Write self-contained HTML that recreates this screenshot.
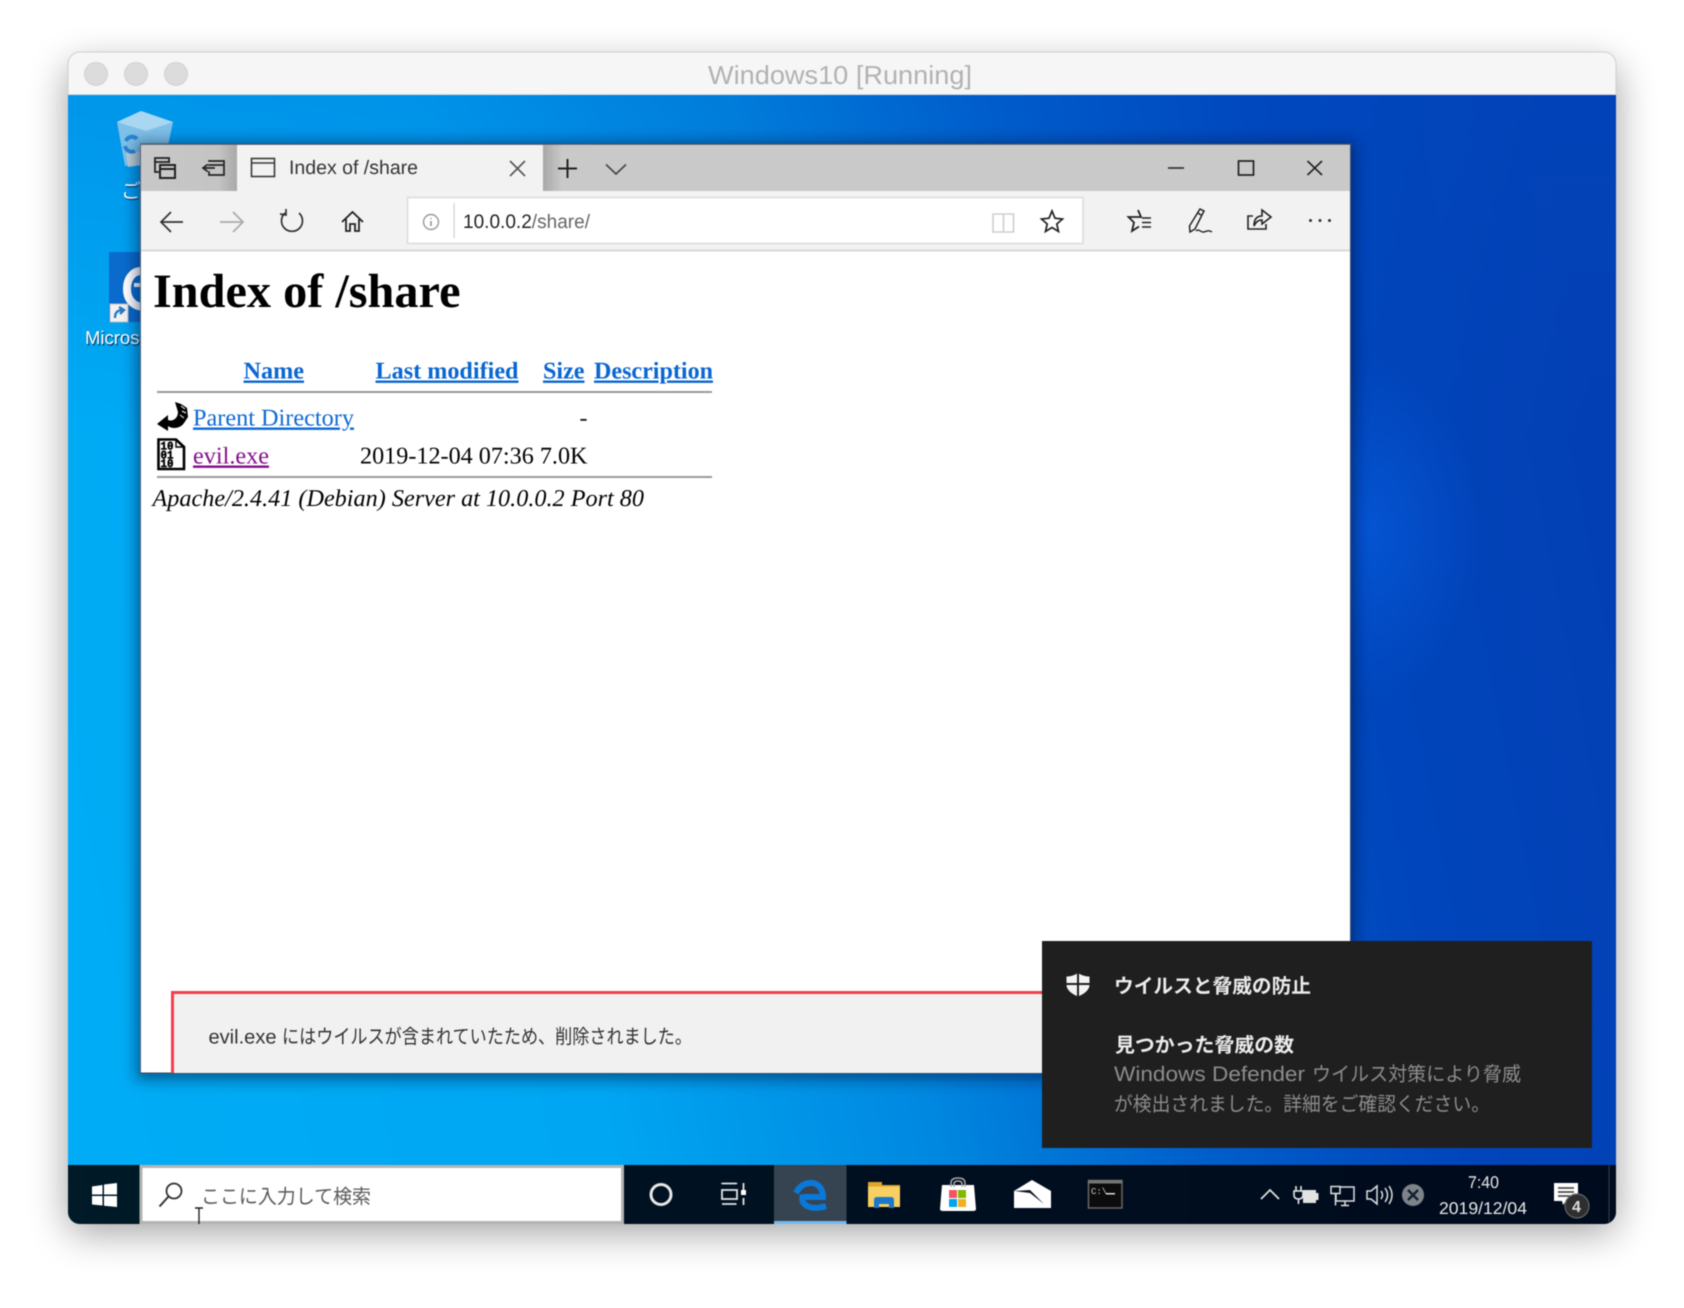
<!DOCTYPE html>
<html lang="ja"><head><meta charset="utf-8"><title>Windows10 [Running]</title>
<style>
html,body{margin:0;padding:0;background:#fff;width:1684px;height:1308px;overflow:hidden}
svg{display:block;position:absolute;left:0;top:0;filter:blur(.65px)}
text{font-family:"Liberation Sans","Noto Sans CJK JP",sans-serif;text-rendering:geometricPrecision}
.s{font-family:"Liberation Serif","Noto Serif CJK SC",serif}
</style></head><body>
<svg width="1684" height="1308" viewBox="0 0 1684 1308" xmlns="http://www.w3.org/2000/svg">
<defs>
<filter id="vmsh" x="-10%" y="-10%" width="120%" height="125%"><feGaussianBlur stdDeviation="20"/></filter>
<filter id="brsh" x="-5%" y="-5%" width="110%" height="110%"><feGaussianBlur stdDeviation="7"/></filter>
<clipPath id="vm"><path d="M68,95H1616V1212a12,12 0 0 1-12,12H80a12,12 0 0 1-12-12Z"/></clipPath>
<linearGradient id="wall" gradientUnits="userSpaceOnUse" x1="68" y1="820" x2="1616" y2="520">
<stop offset="0" stop-color="#00acf5"/><stop offset=".3" stop-color="#00a6f2"/><stop offset=".5" stop-color="#0088e0"/><stop offset=".66" stop-color="#0060cc"/><stop offset=".82" stop-color="#0046bc"/><stop offset="1" stop-color="#033fb4"/></linearGradient>
<linearGradient id="top" x1="0" y1="0" x2="0" y2="1"><stop offset="0" stop-color="#0050c8" stop-opacity=".22"/><stop offset=".3" stop-color="#0050c8" stop-opacity="0"/></linearGradient>
<radialGradient id="glow"><stop offset="0" stop-color="#0a66ee" stop-opacity=".45"/><stop offset="1" stop-color="#0a66ee" stop-opacity="0"/></radialGradient>
<linearGradient id="tabl" x1="0" y1="0" x2="1" y2="0"><stop offset="0" stop-color="#c8c8c8"/><stop offset=".8" stop-color="#c4c4c4"/><stop offset="1" stop-color="#a8a8a8"/></linearGradient>
<linearGradient id="tabr" x1="0" y1="0" x2="1" y2="0"><stop offset="0" stop-color="#a8a8a8"/><stop offset="1" stop-color="#cacaca"/></linearGradient>
<linearGradient id="tb" x1="0" y1="0" x2="1" y2="0"><stop offset="0" stop-color="#001a28"/><stop offset=".5" stop-color="#001020"/><stop offset="1" stop-color="#000b1e"/></linearGradient>
</defs>

<rect width="1684" height="1308" fill="#fff"/>
<rect x="68" y="66" width="1548" height="1166" rx="12" fill="#000" opacity=".38" filter="url(#vmsh)"/>
<path d="M68,64a12,12 0 0 1 12-12H1604a12,12 0 0 1 12,12V96H68Z" fill="#f6f6f6"/>
<path d="M68,95V64a12,12 0 0 1 12-12H1604a12,12 0 0 1 12,12V95" fill="none" stroke="#cfcfcf"/>
<rect x="68" y="94" width="1548" height="1.500" fill="#dedede"/>
<g fill="#dcdcdc" stroke="#d2d2d2"><circle cx="96" cy="74" r="11.500"/><circle cx="136" cy="74" r="11.500"/><circle cx="176" cy="74" r="11.500"/></g>
<text x="708" y="84" font-size="26" fill="#b2b2b2" textLength="264" lengthAdjust="spacingAndGlyphs">Windows10 [Running]</text>

<g clip-path="url(#vm)">
<rect x="68" y="95" width="1548" height="1130" fill="url(#wall)"/>
<rect x="68" y="95" width="1548" height="1130" fill="url(#top)"/>
<ellipse cx="1370" cy="530" rx="110" ry="170" fill="url(#glow)"/>

<!-- desktop icons -->
<polygon points="117,122 141,111 173,122 165,160 125,166" fill="#7ec1e8"/>
<polygon points="117,122 141,111 173,122 146,131" fill="#a9d7f2"/>
<polygon points="126,153 165,150 163,162 128,167" fill="#bccfd8"/>
<path d="M126,141a6.500,6.500 0 0 1 11-2" fill="none" stroke="#2a86d4" stroke-width="4"/>
<path d="M125,146a7,7 0 0 0 10,5" fill="none" stroke="#2a86d4" stroke-width="4"/>
<text x="121" y="198" font-size="20" fill="#0a3e70" opacity=".75" dx="1" dy="1.500">ごみ箱</text>
<text x="121" y="198" font-size="20" fill="#fff">ごみ箱</text>
<rect x="109" y="252" width="32" height="70" fill="#0a6bcc"/>
<path d="M146,272C134,268 127,278 127,289C127,302 137,309 148,306" fill="none" stroke="#fff" stroke-width="8"/>
<path d="M134,285H142" stroke="#fff" stroke-width="4"/>
<rect x="110" y="304" width="18" height="18" fill="#f2f2f2" stroke="#bbb"/>
<path d="M115,318c0-6 3-8 8-8M119,307l5,3-4,4" fill="none" stroke="#2878c8" stroke-width="2.400"/>
<text x="85" y="344" font-size="18.500" fill="#05294f" opacity=".8" dx="1" dy="1.500">Microsoft Edge</text>
<text x="85" y="344" font-size="18.500" fill="#fff">Microsoft Edge</text>

<!-- browser shadow -->
<rect x="136" y="142" width="1219" height="938" fill="#00183c" opacity=".5" filter="url(#brsh)"/>
<!-- browser -->
<rect x="140.500" y="144" width="1210" height="929" fill="#fff"/>
<rect x="140.500" y="144" width="1210" height="47" fill="#c9c9c9"/>
<rect x="140.500" y="144" width="97" height="47" fill="url(#tabl)"/>
<rect x="543" y="144" width="20" height="47" fill="url(#tabr)"/>
<rect x="237" y="145" width="306" height="46" fill="#f2f2f2"/>
<rect x="140.500" y="191" width="1210" height="59" fill="#f2f2f2"/>
<rect x="140.500" y="249.500" width="1210" height="2" fill="#dadada"/>
<rect x="140" y="143.500" width="1211" height="1.200" fill="#3d4f62"/>
<rect x="140" y="144" width="1" height="930" fill="#56687a"/>
<rect x="1350" y="144" width="1" height="800" fill="#3d5378"/>
<rect x="140" y="1072.500" width="905" height="1.200" fill="#3a4e60"/>

<!-- tab strip icons -->
<g stroke="#222" stroke-width="2" fill="none" stroke-linecap="square" stroke-linejoin="miter">
<path d="M169,162V158H155V172H159" stroke-width="1.800"/><path d="M155,162H169" stroke-width="1.800"/>
<rect x="160" y="165" width="15" height="13" fill="#c8c8c8"/><path d="M160,169H175"/>
<path d="M209,161H224V175H209V172M209,165H224M214,168H204" stroke-width="1.700"/><path d="M207,165l-4,3 4,3" stroke-width="1.700"/>
</g>
<g fill="none" stroke="#3a3a3a" stroke-width="1.600">
<rect x="251.500" y="158.500" width="23" height="18"/><path d="M252,163H274"/>
</g>
<text x="289" y="174" font-size="19.500" fill="#333" textLength="129" lengthAdjust="spacingAndGlyphs">Index of /share</text>
<path d="M510,161L525,176M525,161L510,176" stroke="#555" stroke-width="1.600" fill="none"/>
<path d="M567.500,159V178M558,168.500H577" stroke="#222" stroke-width="2" fill="none"/>
<path d="M606,164.500l10,9.500 10-9.500" stroke="#444" stroke-width="1.600" fill="none"/>
<path d="M1168,168H1184" stroke="#222" stroke-width="1.600"/>
<rect x="1238.500" y="161" width="15" height="14" fill="none" stroke="#222" stroke-width="1.700"/>
<path d="M1307.500,161L1322,175M1322,161L1307.500,175" stroke="#222" stroke-width="1.600" fill="none"/>

<!-- toolbar -->
<g fill="none" stroke-width="1.700">
<path d="M161,222H183M171,212L161,222 171,232" stroke="#333"/>
<path d="M220,222H243M233,212L243,222 233,232" stroke="#aaa"/>
<path d="M285,213A10.500,10.500 0 1 0 299,213M286,209L286,215 280,214" stroke="#333"/>
<path d="M342,222L352.500,212 363,222M346,219V231H350V224H355V231H359V219" stroke="#222" stroke-width="1.800"/>
</g>
<rect x="407.500" y="197.500" width="675.500" height="46" fill="#fff" stroke="#dcdcdc" stroke-width="1.600"/>
<circle cx="431" cy="222" r="7.500" fill="none" stroke="#999" stroke-width="1.400"/>
<path d="M431,221V226M431,218V219" stroke="#888" stroke-width="1.400"/>
<rect x="453.500" y="203" width="1.200" height="35" fill="#d0d0d0"/>
<text x="463" y="228" font-size="19.500" fill="#666" textLength="127" lengthAdjust="spacingAndGlyphs"><tspan fill="#222">10.0.0.2</tspan>/share/</text>
<path d="M993,214h9.500l1,1 1-1h9v18h-20.500ZM1003.500,215v17" fill="none" stroke="#cfcfcf" stroke-width="1.600"/>
<path d="M1052,211L1055,218.200 1062.500,219 1056.800,224 1058.500,231.500 1052,227.500 1045.500,231.500 1047.200,224 1041.500,219 1049,218.200Z" fill="none" stroke="#222" stroke-width="1.700"/>
<path d="M1138,210L1141,217H1128.500L1134,222.500 1132,231 1139,226.500" fill="none" stroke="#222" stroke-width="1.800"/>
<path d="M1142,218H1151M1142,222.500H1151M1142,227H1151" stroke="#222" stroke-width="1.500"/>
<path d="M1200,209L1204,211 1195,229 1190,232 1189.500,226ZM1197,212.500L1201,215" fill="none" stroke="#222" stroke-width="1.500"/>
<path d="M1196,231C1199,228 1201,233 1204,232C1207,231 1209,230 1212,232" fill="none" stroke="#222" stroke-width="1.400"/>
<path d="M1253,216H1248V229H1266V224M1254,226C1254,218 1258,216 1262,216V210L1271,217 1262,224V220C1258,220 1256,222 1254,226Z" fill="none" stroke="#222" stroke-width="1.600"/>
<g fill="#333"><circle cx="1310.500" cy="220.500" r="1.500"/><circle cx="1320" cy="220.500" r="1.500"/><circle cx="1329.500" cy="220.500" r="1.500"/></g>

<!-- page content -->
<text class="s" x="153" y="307" font-size="48" font-weight="700" fill="#000" textLength="307.500" lengthAdjust="spacingAndGlyphs">Index of /share</text>
<g font-size="24" font-weight="700" fill="#0a66d0">
<text class="s" x="243.500" y="378.500" text-decoration="underline" textLength="60.500" lengthAdjust="spacingAndGlyphs">Name</text>
<text class="s" x="375.500" y="378.500" text-decoration="underline" textLength="143" lengthAdjust="spacingAndGlyphs">Last modified</text>
<text class="s" x="543" y="378.500" text-decoration="underline" textLength="41.500" lengthAdjust="spacingAndGlyphs">Size</text>
<text class="s" x="594" y="378.500" text-decoration="underline" textLength="119" lengthAdjust="spacingAndGlyphs">Description</text>
</g>
<rect x="157" y="391" width="555" height="2" fill="#9a9a9a"/>
<text class="s" x="193" y="425.500" font-size="24" fill="#0f6ad6" text-decoration="underline" textLength="161" lengthAdjust="spacingAndGlyphs">Parent Directory</text>
<text class="s" x="579.500" y="425.500" font-size="24" fill="#111">-</text>
<text class="s" x="193" y="463.500" font-size="24" fill="#85108a" text-decoration="underline" textLength="76" lengthAdjust="spacingAndGlyphs">evil.exe</text>
<text class="s" x="360" y="463.500" font-size="24" fill="#000" textLength="227.500" lengthAdjust="spacingAndGlyphs">2019-12-04 07:36 7.0K</text>
<rect x="157" y="476" width="555" height="2" fill="#9a9a9a"/>
<text class="s" x="152.500" y="506" font-size="24" font-style="italic" fill="#000" textLength="491.500" lengthAdjust="spacingAndGlyphs">Apache/2.4.41 (Debian) Server at 10.0.0.2 Port 80</text>

<!-- apache icons -->
<path d="M175,402L181,404 187,408 188,417 184,423C180,429 172,429 168,426V431L157,424 168,415V420C173,422 178,418 178,412Z" fill="#000"/>
<path d="M181,406L185,409M182,411L186,413M180,415L184,418" stroke="#fff" stroke-width="1"/>
<path d="M158.500,439.500H176L184,447V469H158.500Z" fill="#fff" stroke="#000" stroke-width="2.600"/>
<path d="M176,439V447H184" fill="none" stroke="#000" stroke-width="1.400"/>
<g font-size="11.500" font-weight="700" fill="#000" stroke="#000" stroke-width=".5">
<text x="160.500" y="449.500" textLength="13" lengthAdjust="spacingAndGlyphs" style="font-family:'Liberation Mono',monospace">10</text>
<text x="160.500" y="458.500" textLength="13" lengthAdjust="spacingAndGlyphs" style="font-family:'Liberation Mono',monospace">01</text>
<text x="160.500" y="467" textLength="13" lengthAdjust="spacingAndGlyphs" style="font-family:'Liberation Mono',monospace">10</text>
</g>

<!-- infobar -->
<rect x="171" y="991" width="880" height="82" fill="#f1f1f1"/>
<rect x="171" y="991" width="880" height="3" fill="#f2404f"/>
<rect x="171" y="991" width="3" height="82" fill="#f2404f"/>
<text x="208.500" y="1043.500" font-size="20" fill="#333" textLength="68" lengthAdjust="spacingAndGlyphs">evil.exe</text>
<text x="282" y="1043.500" font-size="20" fill="#333" textLength="410" lengthAdjust="spacingAndGlyphs">にはウイルスが含まれていたため、削除されました。</text>

<!-- notification -->
<rect x="1042" y="941" width="550" height="207" fill="#1f1f1f"/>
<path d="M1078,973C1073,976 1070,976.500 1066.500,976.500V985C1066.500,990 1072,994 1078,996.500C1084,994 1089.500,990 1089.500,985V976.500C1086,976.500 1083,976 1078,973Z" fill="#f4f4f4"/>
<path d="M1078,972V997M1066,984H1090" stroke="#1f1f1f" stroke-width="2"/>
<text x="1114" y="993" font-size="20" font-weight="700" fill="#ececec" textLength="197" lengthAdjust="spacingAndGlyphs">ウイルスと脅威の防止</text>
<text x="1115" y="1052" font-size="20" font-weight="700" fill="#ececec" textLength="179" lengthAdjust="spacingAndGlyphs">見つかった脅威の数</text>
<text x="1114" y="1081" font-size="21" fill="#8c8c8c" textLength="191" lengthAdjust="spacingAndGlyphs">Windows Defender</text>
<text x="1312" y="1081" font-size="20" fill="#8c8c8c" textLength="209" lengthAdjust="spacingAndGlyphs">ウイルス対策により脅威</text>
<text x="1114" y="1111" font-size="20" fill="#8c8c8c" textLength="376" lengthAdjust="spacingAndGlyphs">が検出されました。詳細をご確認ください。</text>

<!-- taskbar -->
<rect x="68" y="1165" width="1548" height="60" fill="url(#tb)"/>
<rect x="1608.500" y="1165" width="1.200" height="60" fill="#2c3a4a"/>
<g fill="#fff"><polygon points="92,1186.500 102.500,1185 102.500,1194.500 92,1194.500"/><polygon points="104,1184.500 117,1183 117,1194.500 104,1194.500"/><polygon points="92,1196 102.500,1196 102.500,1205.500 92,1204.500"/><polygon points="104,1196 117,1196 117,1207 104,1205.700"/></g>
<rect x="141" y="1165" width="483" height="59" fill="#fff"/>
<path d="M141,1224V1166.500H622.500V1222.500H141" fill="none" stroke="#b4b4b4" stroke-width="3"/>
<circle cx="174" cy="1191" r="7.500" fill="none" stroke="#333" stroke-width="1.800"/>
<path d="M168.500,1196.500L159.500,1206.500" stroke="#333" stroke-width="2"/>
<text x="201" y="1203.500" font-size="20" fill="#5a5a5a" textLength="170" lengthAdjust="spacingAndGlyphs">ここに入力して検索</text>
<path d="M195,1208H203M199,1208V1224" stroke="#222" stroke-width="1.400" fill="none"/>
<circle cx="661" cy="1194.500" r="10" fill="none" stroke="#e6e6e6" stroke-width="3"/>
<g fill="none" stroke="#e2e2e2" stroke-width="1.800">
<path d="M722,1183.500H736.500M722,1184v-1M736.500,1184v-1"/><rect x="722" y="1190" width="15" height="9"/><path d="M722,1204H736.500"/>
<path d="M743.500,1183V1190M743.500,1198V1205"/></g><rect x="741" y="1190" width="5" height="5" fill="#fff"/>
<rect x="774" y="1165" width="72.500" height="57" fill="#364451"/>
<rect x="774" y="1221" width="72.500" height="3" fill="#76b9ed"/>
<g fill="none" stroke="#0a78d8" stroke-width="6"><path d="M803,1197H823C823,1187 816,1182 809,1183C802,1184 798,1189 796,1193"/><path d="M803,1195C799,1205 811,1211 826,1206"/></g>
<rect x="868" y="1182" width="14" height="6" fill="#e0a32a"/><rect x="868" y="1185" width="32" height="22" fill="#f7cf62"/><rect x="868" y="1185" width="32" height="1.500" fill="#e0a32a"/><path d="M874,1208V1200q0-3 3-3h14q3,0 3,3v8h-5v-4h-10v4Z" fill="#1c78cc"/>
<path d="M942,1185H974L976,1209Q976,1211 973,1211H943Q940,1211 940,1209Z" fill="#fff"/>
<path d="M951,1187V1183q0-5 7-5t7,5v4M954,1187V1184q0-3 4-3t4,3v3" fill="none" stroke="#a8a8a8" stroke-width="1.500"/>
<rect x="949" y="1190" width="8" height="8" fill="#f25560"/><rect x="958" y="1190" width="8" height="8" fill="#7fba00"/><rect x="949" y="1199" width="8" height="8" fill="#00a4ef"/><rect x="958" y="1199" width="8" height="8" fill="#efb122"/>
<polygon points="1014,1191 1032,1180 1051,1191 1051,1208 1014,1208" fill="#fff"/>
<polygon points="1014,1191 1030,1190 1044,1204 1030,1193" fill="#08131f"/>
<rect x="1088.500" y="1180.500" width="33.500" height="27.500" fill="#0c0c0c" stroke="#666" stroke-width="1.500"/><rect x="1088" y="1180" width="34" height="3.500" fill="#757575"/>
<text x="1091" y="1194" font-size="9" fill="#ccc" style="font-family:'Liberation Mono',monospace">C:\</text><rect x="1106" y="1193" width="9" height="1.500" fill="#ddd"/>

<path d="M1261,1199L1270,1190 1279,1199" fill="none" stroke="#ddd" stroke-width="1.800"/>
<path d="M1296,1186V1191M1301,1186V1191M1294,1191H1303V1195Q1303,1199 1298.500,1199T1294,1195ZM1298.500,1199V1204" fill="none" stroke="#e8e8e8" stroke-width="1.600"/>
<rect x="1303" y="1190" width="13" height="13" fill="#e2e2e2"/><rect x="1316" y="1193" width="2.500" height="7" fill="#e2e2e2"/>
<g fill="none" stroke="#dedede" stroke-width="1.500"><rect x="1331" y="1186.500" width="9" height="7"/><path d="M1340,1187H1354V1201H1336V1194M1335.500,1193.500V1205.500M1341,1205.500H1349M1345,1201V1205"/></g>
<path d="M1367,1191V1199H1371L1377,1204V1186L1371,1191ZM1381,1191Q1384,1195 1381,1199M1385,1188Q1390,1195 1385,1202M1389,1186Q1395,1195 1389,1204" fill="none" stroke="#dedede" stroke-width="1.500"/>
<circle cx="1413" cy="1195" r="11" fill="#7d8389"/><path d="M1408,1190L1418,1200M1418,1190L1408,1200" stroke="#10202e" stroke-width="2.400"/>
<text x="1468" y="1188" font-size="17" fill="#e6e6e6" textLength="31" lengthAdjust="spacingAndGlyphs">7:40</text>
<text x="1439" y="1214" font-size="17" fill="#e6e6e6" textLength="88" lengthAdjust="spacingAndGlyphs">2019/12/04</text>
<path d="M1554,1183H1578V1201H1566L1563,1205 1562,1201H1554Z" fill="#fff"/>
<path d="M1558,1188H1574M1558,1192H1574M1558,1196H1570" stroke="#333" stroke-width="1.400"/>
<circle cx="1577" cy="1206" r="12" fill="#2e2e2e" stroke="#666" stroke-width="1.200"/>
<text x="1572" y="1212" font-size="16" font-weight="700" fill="#ddd">4</text>
</g>
</svg>
</body></html>
